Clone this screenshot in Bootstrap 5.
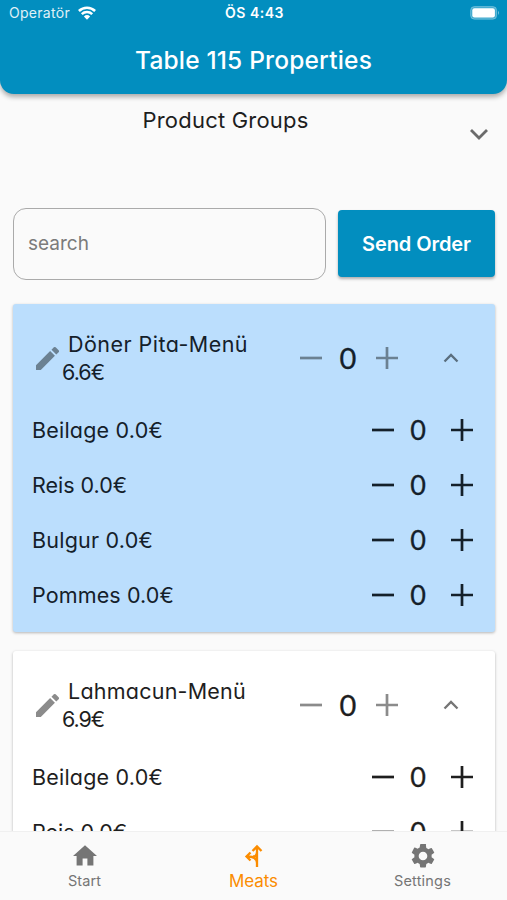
<!DOCTYPE html>
<html lang="en">
<head>
<meta charset="utf-8">
<meta name="viewport" content="width=device-width, initial-scale=1">
<title>Table 115 Properties</title>
<link href="https://cdn.jsdelivr.net/npm/bootstrap@5.3.0/dist/css/bootstrap.min.css" rel="stylesheet">
<style>
  body { font-family: Inter, "Liberation Sans", sans-serif; background: #fafafa; color: #1e1e1e; height: 900px; }
  svg { display: block; flex: none; }
  .app-header { height: 94px; background: #028ebf; border-radius: 0 0 14px 14px; box-shadow: 0 3px 5px rgba(0,0,0,.32); z-index: 2; }
  .status-bar { height: 26px; font-size: 14px; line-height: 26px; padding: 0 7px 0 9px; }
  .status-side { flex: 1 1 0; }
  .status-name { opacity: .88; }
  .fit { display: inline-block; white-space: nowrap; }
  .app-title { font-size: 24.5px; line-height: 30px; font-weight: 500; padding-top: 19px; }
  .lex { font-family: Inter, Lato, sans-serif; font-feature-settings: "cv11" 1; }
  .group-picker { height: 114px; padding: 11px 18px 0 0; }
  .group-name { font-size: 22px; line-height: 30px; flex: 1; padding-right: 18px; }
  .group-caret { margin-top: 23px; }
  .tool-row { padding: 0 12px 0 13px; gap: 12px; height: 71px; }
  .search-box { width: 313px; height: 72px; border: 1px solid #aaa; border-radius: 13px; background: transparent; padding: 0 14px; font-size: 19px; color: #777; }
  .search-box::placeholder { color: #7b7b7b; opacity: 1; }
  .send-btn { width: 157px; height: 67px; background: #028ebf; border-radius: 4px; font-size: 20px; font-weight: 600; box-shadow: 0 2px 3px rgba(0,0,0,.3); }
  .send-btn:hover { background: #027fac; }
  .scroll-area { min-height: 0; overflow: hidden; padding: 25px 12px 0 13px; }
  .menu-card { background: #fff; height: 328px; border-radius: 3px; box-shadow: 0 1px 3px rgba(0,0,0,.28); margin-bottom: 19px; flex: none; }
  .menu-card.picked { background: #bbdefd; color: #14202a; }
  .menu-head { height: 98px; padding: 25px 36px 0 23px; }
  .pencil-slot { padding-top: 18px; }
  .menu-text { font-size: 21.5px; line-height: 28px; padding: 1px 0 0 3px; width: 241px; }
  .menu-text .dish { padding-left: 6px; }
  .menu-controls { height: 58px; }
  .dim { color: #8b8b8b; }
  .picked .dim { color: #6b8192; }
  .caret { color: #757575; }
  .picked .caret { color: #5a6e7e; }
  .qty { font-family: Lato, sans-serif; font-size: 29px; line-height: 30px; text-align: center; width: 20px; margin: 0 18px 0 16px; -webkit-text-stroke: .3px currentColor; }
  .option-row { height: 55px; padding: 0 22px 0 19px; font-size: 21.5px; }
  .option-row .option-name { padding-top: 2px; }
  .option-row .qty { font-size: 27px; margin: 0 23px 0 14px; }
  .tab-bar { height: 69px; background: #fafafa; color: #757575; border-top: 1px solid #f0f0f0; padding-top: 12px; font-size: 14.5px; }
  .tab-bar a { flex: 1 1 0; color: inherit; line-height: 20px; }
  .tab-bar a.current { color: #fb8c00; font-size: 17px; }
  .tab-label { padding-top: 3px; }
</style>
</head>
<body class="d-flex flex-column overflow-hidden">
<svg class="d-none" xmlns="http://www.w3.org/2000/svg">
  <symbol id="minus" viewBox="0 0 22 22"><path d="M0 11h22" fill="none" stroke="currentColor" stroke-width="2.7"/></symbol>
  <symbol id="plus" viewBox="0 0 22 22"><path d="M0 11h22M11 0v22" fill="none" stroke="currentColor" stroke-width="2.7"/></symbol>
  <symbol id="pencil" viewBox="3 3 18 18"><path fill="currentColor" d="M3 17.25V21h3.75L17.81 9.94l-3.75-3.75L3 17.25zM20.71 7.04a1 1 0 0 0 0-1.41l-2.34-2.34a1 1 0 0 0-1.41 0l-1.83 1.83 3.75 3.75 1.83-1.83z"/></symbol>
  <symbol id="caret-up" viewBox="0 0 16 10"><path d="M1.5 8.5 8 2l6.5 6.5" fill="none" stroke="currentColor" stroke-width="2.3"/></symbol>
</svg>

<header class="app-header position-relative flex-shrink-0 text-white">
  <div class="status-bar d-flex align-items-center">
    <div class="status-side d-flex align-items-center">
      <span class="status-name fit" data-w="61">Operatör</span>
      <svg class="ms-2" width="18" height="14" viewBox="0 0 18 14" fill="none" stroke="#fff" stroke-width="2.5"><path d="M.9 5a11.6 11.6 0 0 1 16.2 0M3.8 8.1a7.4 7.4 0 0 1 10.4 0"/><path d="M9 13.7 5.9 10.5a4.5 4.5 0 0 1 6.2 0z" fill="#fff" stroke="none"/></svg>
    </div>
    <span class="fw-semibold fit" data-w="59">ÖS 4:43</span>
    <div class="status-side d-flex justify-content-end">
      <svg width="30" height="14" viewBox="0 0 30 14"><rect x=".6" y=".6" width="26" height="12.6" rx="3.8" fill="#fff" fill-opacity=".25" stroke="#fff" stroke-opacity=".3"/><rect x="2.3" y="2.3" width="22.6" height="9.2" rx="2.2" fill="#fff"/><path d="M28 4.8q2 2 0 4.2z" fill="#fff" opacity=".45"/></svg>
    </div>
  </div>
  <h1 class="app-title text-center mb-0"><span class="fit" data-w="237">Table 115 Properties</span></h1>
</header>

<section class="group-picker d-flex flex-shrink-0">
  <div class="group-name lex text-center"><span class="fit" data-w="166">Product Groups</span></div>
  <svg class="group-caret" width="20" height="13" viewBox="0 0 20 13"><path d="m2 2 8 8 8-8" fill="none" stroke="#6b6b6b" stroke-width="2.8"/></svg>
</section>

<div class="tool-row d-flex align-items-center flex-shrink-0">
  <input class="search-box" type="text" placeholder="search" aria-label="search">
  <button class="btn send-btn text-white p-0" type="button"><span class="fit" data-w="109">Send Order</span></button>
</div>

<main class="scroll-area flex-grow-1 d-flex flex-column" id="menus"></main>

<nav class="tab-bar d-flex flex-shrink-0 text-center">
  <a href="#" class="text-decoration-none d-flex flex-column align-items-center">
    <svg width="24" height="24" viewBox="2 2 20 20"><path fill="currentColor" d="M10 20v-6h4v6h5v-8h3L12 3 2 12h3v8z"/></svg>
    <span class="tab-label fit" data-w="33">Start</span></a>
  <a href="#" class="current text-decoration-none d-flex flex-column align-items-center">
    <svg width="20" height="24" viewBox="0 0 20 24" fill="none" stroke="currentColor" stroke-width="2.3"><path d="M13 23V3M8.5 7 13 2.500l4.500 4.500M13 19c0-4-3-6.500-10-6.500M6.500 8.500l-4 4 4 4M13 8c0 3-1.500 4.500-4 4.500"/></svg>
    <span class="tab-label fit" data-w="49">Meats</span></a>
  <a href="#" class="text-decoration-none d-flex flex-column align-items-center">
    <svg width="24" height="24" viewBox="2 2 20 20"><path fill="currentColor" d="M19.14 12.94c.04-.3.06-.61.06-.94s-.02-.64-.07-.94l2.03-1.58a.49.49 0 0 0 .12-.61l-1.92-3.32a.49.49 0 0 0-.59-.22l-2.39.96a7 7 0 0 0-1.62-.94l-.36-2.54A.48.48 0 0 0 13.92 2h-3.84a.48.48 0 0 0-.48.41l-.36 2.54a7.3 7.3 0 0 0-1.62.94l-2.39-.96a.49.49 0 0 0-.59.22L2.74 8.87a.48.48 0 0 0 .12.61l2.03 1.58c-.05.3-.09.63-.09.94s.02.64.07.94l-2.03 1.58a.49.49 0 0 0-.12.61l1.92 3.32c.12.22.37.29.59.22l2.39-.96c.5.38 1.03.7 1.62.94l.36 2.54c.05.24.24.41.48.41h3.84c.24 0 .44-.17.47-.41l.36-2.54a7.3 7.3 0 0 0 1.62-.94l2.39.96c.22.08.47 0 .59-.22l1.92-3.32a.48.48 0 0 0-.12-.61zM12 15.6a3.6 3.6 0 1 1 0-7.2 3.6 3.6 0 0 1 0 7.2z"/></svg>
    <span class="tab-label fit" data-w="57">Settings</span></a>
</nav>

<script src="https://cdn.jsdelivr.net/npm/bootstrap@5.3.0/dist/js/bootstrap.bundle.min.js"></script>
<script>
  const menus = [
    { name: 'Döner Pita-Menü', w: 180, price: '6.6€', picked: true },
    { name: 'Lahmacun-Menü', w: 178, price: '6.9€', picked: false }
  ];
  const options = [['Beilage 0.0€', 131], ['Reis 0.0€', 95], ['Bulgur 0.0€', 121], ['Pommes 0.0€', 142]];
  const icon = (id, w, h) => `<svg width="${w}" height="${h}"><use href="#${id}"/></svg>`;
  document.getElementById('menus').innerHTML = menus.map(m => `
    <article class="menu-card ${m.picked ? 'picked' : ''}">
      <div class="menu-head d-flex">
        <div class="dim pencil-slot">${icon('pencil', 23, 23)}</div>
        <div class="menu-text lex"><div class="dish"><span class="fit" data-w="${m.w}">${m.name}</span></div><div><span class="fit" data-w="42">${m.price}</span></div></div>
        <div class="menu-controls d-flex align-items-center flex-grow-1">
          <span class="dim">${icon('minus', 22, 22)}</span>
          <span class="qty">0</span>
          <span class="dim">${icon('plus', 22, 22)}</span>
          <span class="caret ms-auto">${icon('caret-up', 16, 10)}</span>
        </div>
      </div>
      ${options.map(o => `<div class="option-row d-flex align-items-center lex">
        <span class="option-name me-auto"><span class="fit" data-w="${o[1]}">${o[0]}</span></span>
        ${icon('minus', 22, 22)}<span class="qty">0</span>${icon('plus', 22, 22)}
      </div>`).join('')}
    </article>`).join('');

  // Track each label to its designed width.
  document.querySelectorAll('.fit').forEach(el => {
    const n = [...el.textContent].length;
    const gap = (el.dataset.w - el.getBoundingClientRect().width) / n;
    el.style.letterSpacing = gap.toFixed(3) + 'px';
  });
</script>
</body>
</html>
